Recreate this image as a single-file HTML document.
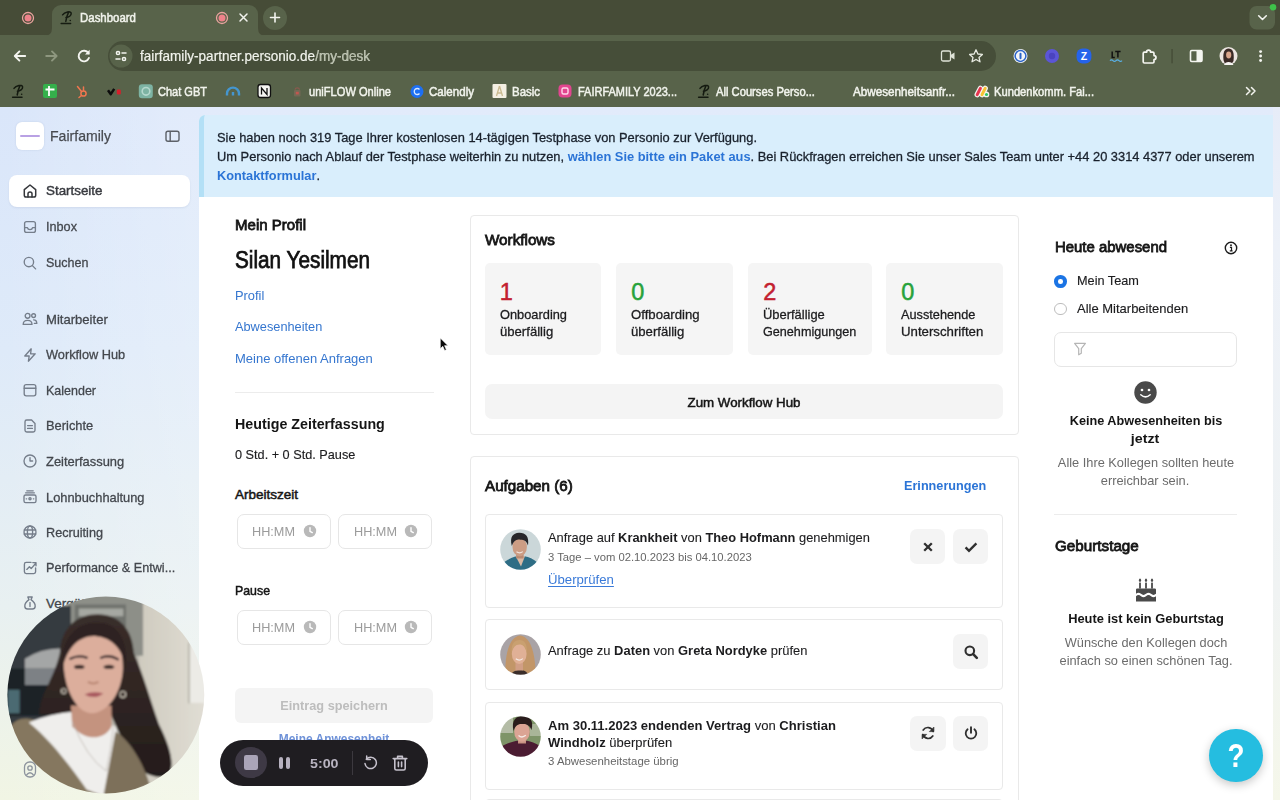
<!DOCTYPE html>
<html lang="de">
<head>
<meta charset="utf-8">
<title>Dashboard</title>
<style>
*{box-sizing:border-box;margin:0;padding:0}
html,body{width:1280px;height:800px;overflow:hidden}
body{font-family:"Liberation Sans",sans-serif;position:relative;background:#e6edf8;color:#1a1a1a;font-size:13px}
.abs{position:absolute}
b{font-weight:bold;-webkit-text-stroke:0}
#tabstrip{left:0;top:0;width:1280px;height:36px;background:#464c37}
#toolbar{left:0;top:35px;width:1280px;height:72px;background:#58634a}
#tab{left:52px;top:5px;width:206px;height:32px;background:#58634a;border-radius:9px 9px 0 0}
#urlpill{left:108px;top:41px;width:888px;height:30px;border-radius:15px;background:#464e39}
#pagebg{left:0;top:107px;width:1280px;height:693px;background:linear-gradient(90deg,rgba(255,255,255,0) 0,rgba(255,255,255,.22) 190px,rgba(255,255,255,.22) 100%),linear-gradient(180deg,#dae6fa 0%,#deeaf9 35%,#e8f0f1 72%,#f1f5e4 100%)}
#main{left:199px;top:115px;width:1074px;height:685px;background:#fff;border-radius:6px 0 0 0}
#banner{left:199px;top:115px;width:1074px;height:82px;background:#d9eefc;border-left:5px solid #b3e0f6;border-radius:6px 0 0 0}
.card{border:1px solid #e9e9e9;border-radius:4px;background:#fff}
.tile{background:#f5f5f5;border-radius:5px}
.btn{background:#f4f4f4;border-radius:7px}
.inp{border:1.5px solid #e6e6e6;border-radius:7px;background:#fff}
.hr{height:1px;background:#ececec}
.av{border-radius:50%;overflow:hidden}
#rstrip{left:1273px;top:107px;width:7px;height:693px;background:linear-gradient(180deg,#e6ecf8 0%,#edf1f8 20%,#f0f3f3 70%,#f5f7ea 100%)}
</style>
</head>
<body>
<div id="tabstrip" class="abs"></div><div id="toolbar" class="abs"></div><div id="tab" class="abs"></div><div id="urlpill" class="abs"></div>
<svg class="abs" style="left:0;top:0" width="1280" height="106" viewBox="0 0 1280 106">
  <!-- tab curves -->
  <path d="M44 36 Q52 36 52 28 L52 36 Z" fill="#58634a"/>
  <path d="M266 36 Q258 36 258 28 L258 36 Z" fill="#58634a"/>
  <!-- record dot 1 -->
  <circle cx="28" cy="18" r="5.500" fill="none" stroke="#e9a39e" stroke-width="1.300"/>
  <circle cx="28" cy="18" r="3.500" fill="#ee828a"/>
  <!-- favicon P -->
  <g stroke="#161c12" stroke-width="1.500" fill="none" stroke-linecap="round" stroke-linejoin="round">
    <path d="M65.800 21.400 C66.400 18 67.200 15 68.400 12.600 M62.600 14.800 C64.500 12 70.800 10.600 71.200 13.200 C71.500 15.600 68.600 17.400 66 17.600"/><path d="M70.200 20.600 h0.100"/>
    <path d="M61.200 23.600 H70.600"/>
  </g>
  <!-- record dot 2 -->
  <circle cx="222" cy="18" r="5.500" fill="none" stroke="#e9a39e" stroke-width="1.300"/>
  <circle cx="222" cy="18" r="3.500" fill="#ee828a"/>
  <!-- close x -->
  <path d="M240 14 L247 21 M247 14 L240 21" stroke="#f2f3ee" stroke-width="1.5" stroke-linecap="round"/>
  <!-- plus -->
  <circle cx="275" cy="18" r="12" fill="#58634a"/>
  <path d="M270.5 17.5 H279.5 M275 13 V22" stroke="#f4f5f0" stroke-width="1.6" stroke-linecap="round"/>
  <!-- chevron box right -->
  <rect x="1249.500" y="6" width="25.500" height="23.500" rx="7" fill="#58634a"/>
  <path d="M1258.700 15.800 L1262.500 19.500 L1266.300 15.800" stroke="#f4f5f0" stroke-width="1.6" fill="none" stroke-linecap="round" stroke-linejoin="round"/>
  <circle cx="1273" cy="7.200" r="3.300" fill="#3ec24a"/>
  <!-- back -->
  <path d="M25.200 56 H15 M19.400 51.400 L14.800 56 L19.400 60.600" stroke="#f4f5f0" stroke-width="1.900" fill="none" stroke-linecap="round" stroke-linejoin="round"/>
  <!-- forward dim -->
  <path d="M46.200 56 H56.400 M52 51.400 L56.600 56 L52 60.600" stroke="#8e977f" stroke-width="1.900" fill="none" stroke-linecap="round" stroke-linejoin="round"/>
  <!-- reload -->
  <path d="M88.400 53.200 A5.300 5.300 0 1 0 88.900 58" stroke="#f4f5f0" stroke-width="1.900" fill="none" stroke-linecap="round"/>
  <path d="M89.600 49.800 V54.400 H85 Z" fill="#f4f5f0"/>
  <!-- site settings -->
  <circle cx="121" cy="56" r="11.5" fill="#58634a"/>
  <g stroke="#f4f5f0" stroke-width="1.5" fill="none" stroke-linecap="round">
    <circle cx="118" cy="53" r="1.6"/><path d="M122 53 H126"/>
    <circle cx="124" cy="59" r="1.6"/><path d="M116 59 H120"/>
  </g>
  <!-- camera -->
  <rect x="941.5" y="51" width="9" height="10" rx="1.5" fill="none" stroke="#dfe3d8" stroke-width="1.3"/>
  <path d="M950.5 55 L954.5 52.5 V59.5 L950.5 57 Z" fill="#dfe3d8"/>
  <!-- star -->
  <path d="M976 49.8 L977.9 54 L982.4 54.4 L979 57.4 L980 61.8 L976 59.5 L972 61.8 L973 57.4 L969.6 54.4 L974.1 54 Z" fill="none" stroke="#e8ebe2" stroke-width="1.3" stroke-linejoin="round"/>
  <!-- 1password -->
  <circle cx="1020.5" cy="56" r="7" fill="#f3f5f8"/>
  <circle cx="1020.5" cy="56" r="5.4" fill="none" stroke="#2a63c8" stroke-width="1.5"/>
  <rect x="1019.5" y="52.8" width="2" height="6.4" rx="1" fill="#2a63c8"/>
  <!-- purple -->
  <circle cx="1052" cy="56" r="7" fill="#5b55d6"/>
  <circle cx="1052" cy="56" r="3.2" fill="#4a43bf"/>
  <!-- Z -->
  <rect x="1076.600" y="48.600" width="14.800" height="14.800" rx="5.800" fill="#2563eb"/>
  <!-- LT -->
  <path d="M1112.200 51.600 V57.400 H1114.800 M1115.200 51.600 H1120.600 M1117.900 51.600 V57.400" stroke="#111" stroke-width="1.500" fill="none"/>
  <path d="M1110 60.600 q1.500 -1.600 3 0 t3 0 t3 0 t3 0" stroke="#5ab0e6" stroke-width="1.300" fill="none"/>
  <!-- puzzle -->
  <path d="M1143.200 53.400 Q1143.200 52.200 1144.400 52.200 H1146.600 A2 2 0 1 1 1150.600 52.200 H1152.800 Q1154 52.200 1154 53.400 V55.600 A2 2 0 1 1 1154 59.600 V61.800 Q1154 63 1152.800 63 H1144.400 Q1143.200 63 1143.200 61.800 Z" fill="none" stroke="#f4f5f0" stroke-width="1.700" stroke-linejoin="round"/>
  <!-- separator -->
  <rect x="1171.400" y="49" width="1.300" height="14.300" fill="#434b36"/>
  <!-- side panel -->
  <rect x="1190.5" y="50.5" width="11.5" height="11" rx="1.2" fill="none" stroke="#f4f5f0" stroke-width="1.6"/>
  <rect x="1196.5" y="50.5" width="5.5" height="11" fill="#f4f5f0"/>
  <!-- avatar -->
  <circle cx="1228.5" cy="56" r="9" fill="#ece6e2"/>
  <path d="M1223.5 60 C1222.5 52 1225 48.5 1228.5 48.5 C1232.5 48.5 1234.5 52 1233.5 61 L1231.5 64 H1225 Z" fill="#3a2a26"/>
  <ellipse cx="1228.7" cy="55" rx="2.6" ry="3.4" fill="#d9a68c"/>
  <path d="M1224 65 C1225 61 1232 61 1233.5 65 Z" fill="#f6f4f2"/>
  <!-- dots -->
  <circle cx="1260.600" cy="51.600" r="1.450" fill="#f4f5f0"/><circle cx="1260.600" cy="56" r="1.450" fill="#f4f5f0"/><circle cx="1260.600" cy="60.500" r="1.450" fill="#f4f5f0"/>

  <!-- bookmarks icons -->
  <g stroke="#141a10" stroke-width="1.500" fill="none" stroke-linecap="round" stroke-linejoin="round" transform="translate(-48.600 73.600)">
    <path d="M65.800 21.400 C66.400 18 67.200 15 68.400 12.600 M62.600 14.800 C64.500 12 70.800 10.600 71.200 13.200 C71.500 15.600 68.600 17.400 66 17.600"/><path d="M70.200 20.600 h0.100"/>
    <path d="M61.200 23.600 H70.600"/>
  </g>
  <rect x="43" y="84" width="14" height="14" rx="2" fill="#35b04b"/>
  <path d="M45.500 89.500 H54.500 M49 86 V96" stroke="#fff" stroke-width="1.800"/>
  <g stroke="#f0764f" stroke-width="1.500" fill="none" stroke-linecap="round">
    <circle cx="83.500" cy="93.500" r="2.600"/><path d="M83.500 90.500 V87 M81.500 91.500 L77.500 86.500 M81.500 95.500 L79 97.500"/>
  </g>
  <path d="M108 90.200 L110.800 94.200 L114.200 88.800" stroke="#0c0c0c" stroke-width="2.500" fill="none" stroke-linejoin="round"/>
  <rect x="116.800" y="89.500" width="4" height="5" rx="1.200" fill="#d61f2b"/>
  <rect x="138.800" y="84.300" width="14" height="14" rx="3.200" fill="#7db3a3"/>
  <circle cx="146" cy="91.300" r="3.800" fill="none" stroke="#b5d8cd" stroke-width="1.600"/>
  <path d="M227 95.400 V93.600 A6 6 0 0 1 239 93.600 V95.400 M233 95.400 V92" stroke="#4496d0" stroke-width="2.400" fill="none"/>
  <rect x="258" y="84.500" width="12.500" height="13" rx="2.500" fill="#f5f5f2" stroke="#111" stroke-width="1.300"/>
  <path d="M261.500 94.500 V88 L267 94.500 V88" stroke="#111" stroke-width="1.300" fill="none"/>
  <rect x="294" y="90" width="6.500" height="6.500" rx="1" fill="#7a6a58" opacity=".8"/><rect x="295.800" y="91.800" width="3" height="2.600" fill="#c2564f"/>
  <path d="M295 89.600 A2.300 2.300 0 0 1 299.500 89.600" stroke="#8a5a4e" stroke-width="1.300" fill="none"/>
  <circle cx="417" cy="91.500" r="6.500" fill="#1d6ff2"/>
  <path d="M419.500 89.500 A3 3 0 1 0 419.500 93.500" stroke="#d8e8ff" stroke-width="1.300" fill="none"/>
  <rect x="492.500" y="84" width="14" height="14" rx="1" fill="#f4efe2"/>
  <path d="M499.500 86 L496.500 96 M499.500 86 L502.500 96 M497.500 93 H501.500" stroke="#c9b98f" stroke-width="1.300" fill="none"/>
  <rect x="558.500" y="84.500" width="13" height="13" rx="4" fill="#e2458f"/>
  <rect x="562" y="88" width="6" height="6" rx="1.500" fill="none" stroke="#ffd9ea" stroke-width="1.400"/>
  <g stroke="#141a10" stroke-width="1.500" fill="none" stroke-linecap="round" stroke-linejoin="round" transform="translate(637.400 73.600)">
    <path d="M65.800 21.400 C66.400 18 67.200 15 68.400 12.600 M62.600 14.800 C64.500 12 70.800 10.600 71.200 13.200 C71.500 15.600 68.600 17.400 66 17.600"/><path d="M70.200 20.600 h0.100"/>
    <path d="M61.200 23.600 H70.600"/>
  </g>
  <path d="M977.200 94.600 L980.400 88.400 M982 94.600 L985.200 88.400" stroke="#f6f4f0" stroke-width="5.400" stroke-linecap="round"/><circle cx="986.400" cy="94.400" r="2.900" fill="#f6f4f0"/>
  <path d="M977.200 94.600 L980.400 88.400" stroke="#e8354f" stroke-width="3" stroke-linecap="round"/>
  <path d="M982 94.600 L985.200 88.400" stroke="#f7c331" stroke-width="3" stroke-linecap="round"/>
  <circle cx="986.500" cy="94.500" r="1.600" fill="#2fc566"/>
  <path d="M1246.500 87.500 L1250 91 L1246.500 94.500 M1251.500 87.500 L1255 91 L1251.500 94.500" stroke="#f4f5f0" stroke-width="1.500" fill="none" stroke-linecap="round" stroke-linejoin="round"/>
</svg>
<div class="abs" style="top:9.9px;height:16px;line-height:16px;font-size:12px;color:#f1f3ec;white-space:nowrap;transform:scaleX(0.9537);transform-origin:0 50%;-webkit-text-stroke:0.5px #f1f3ec;left:80px;">Dashboard</div><div class="abs" style="top:46.7px;height:18px;line-height:18px;font-size:14px;color:#f1f3ec;white-space:nowrap;transform:scaleX(0.9659);transform-origin:0 50%;-webkit-text-stroke:0.2px #f1f3ec;left:140px;">fairfamily-partner.personio.de<span style="color:#b4bba6">/my-desk</span></div><div class="abs" style="top:49.1px;height:14px;line-height:14px;font-size:10.5px;color:#fff;white-space:nowrap;font-weight:bold;left:1084px;width:0;display:flex;justify-content:center;"><span style="white-space:nowrap">Z</span></div><div class="abs" style="top:83.8px;height:16px;line-height:16px;font-size:12px;color:#f1f3ec;white-space:nowrap;transform:scaleX(0.9183);transform-origin:0 50%;-webkit-text-stroke:0.5px #f1f3ec;left:158px;">Chat GBT</div><div class="abs" style="top:83.8px;height:16px;line-height:16px;font-size:12px;color:#f1f3ec;white-space:nowrap;transform:scaleX(0.9244);transform-origin:0 50%;-webkit-text-stroke:0.5px #f1f3ec;left:309px;">uniFLOW Online</div><div class="abs" style="top:83.8px;height:16px;line-height:16px;font-size:12px;color:#f1f3ec;white-space:nowrap;transform:scaleX(0.9635);transform-origin:0 50%;-webkit-text-stroke:0.5px #f1f3ec;left:429px;">Calendly</div><div class="abs" style="top:83.8px;height:16px;line-height:16px;font-size:12px;color:#f1f3ec;white-space:nowrap;transform:scaleX(0.9542);transform-origin:0 50%;-webkit-text-stroke:0.5px #f1f3ec;left:512px;">Basic</div><div class="abs" style="top:83.8px;height:16px;line-height:16px;font-size:12px;color:#f1f3ec;white-space:nowrap;transform:scaleX(0.9143);transform-origin:0 50%;-webkit-text-stroke:0.5px #f1f3ec;left:578px;">FAIRFAMILY 2023...</div><div class="abs" style="top:83.8px;height:16px;line-height:16px;font-size:12px;color:#f1f3ec;white-space:nowrap;transform:scaleX(0.9335);transform-origin:0 50%;-webkit-text-stroke:0.5px #f1f3ec;left:716px;">All Courses Perso...</div><div class="abs" style="top:83.8px;height:16px;line-height:16px;font-size:12px;color:#f1f3ec;white-space:nowrap;transform:scaleX(0.9739);transform-origin:0 50%;-webkit-text-stroke:0.5px #f1f3ec;left:853px;">Abwesenheitsanfr...</div><div class="abs" style="top:83.8px;height:16px;line-height:16px;font-size:12px;color:#f1f3ec;white-space:nowrap;transform:scaleX(0.9312);transform-origin:0 50%;-webkit-text-stroke:0.5px #f1f3ec;left:994px;">Kundenkomm. Fai...</div>
<div id="pagebg" class="abs"></div><div id="main" class="abs"></div><div id="banner" class="abs"></div><div id="rstrip" class="abs"></div>
<div class="abs" style="left:16px;top:122px;width:28px;height:28px;border-radius:6px;background:#fff;box-shadow:0 0 2px rgba(120,140,180,.25)"></div><div class="abs" style="left:20px;top:135.3px;width:20px;height:1.6px;background:#8a63d2;border-radius:1px;opacity:.6"></div><div class="abs" style="top:126.1px;height:20px;line-height:20px;font-size:15.5px;color:#484b51;white-space:nowrap;transform:scaleX(0.9081);transform-origin:0 50%;-webkit-text-stroke:0.25px #484b51;left:50px;">Fairfamily</div><svg class="abs" style="left:164px;top:129px" width="18" height="15" viewBox="0 0 18 15"><rect x="2" y="2.2" width="13" height="10" rx="2" fill="none" stroke="#5d6168" stroke-width="1.4"/><path d="M6.2 2.2 V12.2" stroke="#5d6168" stroke-width="1.4"/></svg><div class="abs" style="left:9px;top:175px;width:181px;height:32px;border-radius:8px;background:#fff;box-shadow:0 1px 2px rgba(90,110,150,.12)"></div><svg class="abs" style="left:20px;top:181px" width="20" height="20" viewBox="0 0 20 20" fill="none" stroke="#35373b" stroke-width="1.5" stroke-linecap="round" stroke-linejoin="round"><path d="M4.3 8.6 L10 4 L15.7 8.6 V14.2 Q15.7 16 13.9 16 H6.100 Q4.300 16 4.300 14.200 Z"/><path d="M8 16 V12.800 Q8 11 10 11 Q12 11 12 12.800 V16"/></svg><div class="abs" style="top:182.1px;height:18px;line-height:18px;font-size:13.5px;color:#393b40;white-space:nowrap;transform:scaleX(0.9907);transform-origin:0 50%;-webkit-text-stroke:0.45px #393b40;left:46px;">Startseite</div><svg class="abs" style="left:20px;top:216.5px" width="20" height="20" viewBox="0 0 20 20" fill="none" stroke="#757e8b" stroke-width="1.35" stroke-linecap="round" stroke-linejoin="round"><rect x="4.600" y="4.600" width="10.800" height="10.800" rx="2"/><path d="M4.600 10.600 H7.400 Q7.800 12.600 10 12.600 Q12.200 12.600 12.600 10.600 H15.400"/></svg><div class="abs" style="top:218.2px;height:18px;line-height:18px;font-size:13.5px;color:#43474d;white-space:nowrap;transform:scaleX(0.9385);transform-origin:0 50%;-webkit-text-stroke:0.3px #43474d;left:46px;">Inbox</div><svg class="abs" style="left:20px;top:252.5px" width="20" height="20" viewBox="0 0 20 20" fill="none" stroke="#757e8b" stroke-width="1.35" stroke-linecap="round" stroke-linejoin="round"><circle cx="8.900" cy="9" r="4.700"/><path d="M12.400 12.600 L15.600 15.900"/></svg><div class="abs" style="top:253.6px;height:18px;line-height:18px;font-size:13.5px;color:#43474d;white-space:nowrap;transform:scaleX(0.9280);transform-origin:0 50%;-webkit-text-stroke:0.3px #43474d;left:46px;">Suchen</div><svg class="abs" style="left:20px;top:309px" width="20" height="20" viewBox="0 0 20 20" fill="none" stroke="#757e8b" stroke-width="1.35" stroke-linecap="round" stroke-linejoin="round"><circle cx="7.600" cy="6.800" r="2.400"/><path d="M3.200 15.400 Q3.200 11.400 7.600 11.400 Q12 11.400 12 15.400 Z"/><circle cx="13.600" cy="6.600" r="1.900"/><path d="M13.600 10.800 Q16.800 10.800 16.800 14.400 H14.400"/></svg><div class="abs" style="top:310.7px;height:18px;line-height:18px;font-size:13.5px;color:#43474d;white-space:nowrap;transform:scaleX(0.9689);transform-origin:0 50%;-webkit-text-stroke:0.3px #43474d;left:46px;">Mitarbeiter</div><svg class="abs" style="left:20px;top:344.5px" width="20" height="20" viewBox="0 0 20 20" fill="none" stroke="#757e8b" stroke-width="1.35" stroke-linecap="round" stroke-linejoin="round"><path d="M11.200 3.800 L4.800 11 H9.200 L8.400 16.200 L15.200 8.800 H10.600 Z"/></svg><div class="abs" style="top:346.2px;height:18px;line-height:18px;font-size:13.5px;color:#43474d;white-space:nowrap;transform:scaleX(0.9453);transform-origin:0 50%;-webkit-text-stroke:0.3px #43474d;left:46px;">Workflow Hub</div><svg class="abs" style="left:20px;top:380px" width="20" height="20" viewBox="0 0 20 20" fill="none" stroke="#757e8b" stroke-width="1.35" stroke-linecap="round" stroke-linejoin="round"><rect x="4.200" y="4.600" width="11.600" height="11.200" rx="2"/><path d="M4.200 8.200 H15.800"/></svg><div class="abs" style="top:381.7px;height:18px;line-height:18px;font-size:13.5px;color:#43474d;white-space:nowrap;transform:scaleX(0.9251);transform-origin:0 50%;-webkit-text-stroke:0.3px #43474d;left:46px;">Kalender</div><svg class="abs" style="left:20px;top:415.5px" width="20" height="20" viewBox="0 0 20 20" fill="none" stroke="#757e8b" stroke-width="1.35" stroke-linecap="round" stroke-linejoin="round"><path d="M5 5.800 Q5 4 6.800 4 H11.600 L15 7.400 V14.200 Q15 16 13.200 16 H6.800 Q5 16 5 14.200 Z"/><path d="M7.600 9.600 H12.400 M7.600 12.400 H12.400"/></svg><div class="abs" style="top:417.3px;height:18px;line-height:18px;font-size:13.5px;color:#43474d;white-space:nowrap;transform:scaleX(0.9529);transform-origin:0 50%;-webkit-text-stroke:0.3px #43474d;left:46px;">Berichte</div><svg class="abs" style="left:20px;top:451px" width="20" height="20" viewBox="0 0 20 20" fill="none" stroke="#757e8b" stroke-width="1.35" stroke-linecap="round" stroke-linejoin="round"><circle cx="10" cy="10" r="6"/><path d="M10 6.600 V10 H12.600"/></svg><div class="abs" style="top:452.7px;height:18px;line-height:18px;font-size:13.5px;color:#43474d;white-space:nowrap;transform:scaleX(0.9560);transform-origin:0 50%;-webkit-text-stroke:0.3px #43474d;left:46px;">Zeiterfassung</div><svg class="abs" style="left:20px;top:486.5px" width="20" height="20" viewBox="0 0 20 20" fill="none" stroke="#757e8b" stroke-width="1.35" stroke-linecap="round" stroke-linejoin="round"><rect x="4" y="8" width="12" height="7.600" rx="1.600"/><circle cx="10" cy="11.800" r="1.100"/><path d="M5.600 5.800 H14.400 M6.800 3.800 H13.200 M6.200 11.800 H6.600 M13.400 11.800 H13.800"/></svg><div class="abs" style="top:488.5px;height:18px;line-height:18px;font-size:13.5px;color:#43474d;white-space:nowrap;transform:scaleX(0.9507);transform-origin:0 50%;-webkit-text-stroke:0.3px #43474d;left:46px;">Lohnbuchhaltung</div><svg class="abs" style="left:20px;top:522px" width="20" height="20" viewBox="0 0 20 20" fill="none" stroke="#757e8b" stroke-width="1.35" stroke-linecap="round" stroke-linejoin="round"><circle cx="10" cy="10" r="6"/><ellipse cx="10" cy="10" rx="2.600" ry="6"/><path d="M4.200 8 H15.800 M4.200 12 H15.800"/></svg><div class="abs" style="top:523.8px;height:18px;line-height:18px;font-size:13.5px;color:#43474d;white-space:nowrap;transform:scaleX(0.9378);transform-origin:0 50%;-webkit-text-stroke:0.3px #43474d;left:46px;">Recruiting</div><svg class="abs" style="left:20px;top:557.5px" width="20" height="20" viewBox="0 0 20 20" fill="none" stroke="#757e8b" stroke-width="1.35" stroke-linecap="round" stroke-linejoin="round"><path d="M11 4.400 H6.200 Q4.400 4.400 4.400 6.200 V13.800 Q4.400 15.600 6.200 15.600 H13.800 Q15.600 15.600 15.600 13.800 V10"/><path d="M6.800 11.400 L9.400 8.800 L11.200 10.600 L15.800 5.200 M12.800 4.600 H16 V7.800"/></svg><div class="abs" style="top:559.3px;height:18px;line-height:18px;font-size:13.5px;color:#43474d;white-space:nowrap;transform:scaleX(0.9358);transform-origin:0 50%;-webkit-text-stroke:0.3px #43474d;left:46px;">Performance &amp; Entwi...</div><svg class="abs" style="left:20px;top:593px" width="20" height="20" viewBox="0 0 20 20" fill="none" stroke="#757e8b" stroke-width="1.35" stroke-linecap="round" stroke-linejoin="round"><path d="M7.800 4 H12.200 L11 6.600 Q15.400 9.600 15.200 13.400 Q15 16 12.400 16 H7.600 Q5 16 4.800 13.400 Q4.600 9.600 9 6.600 Z"/><path d="M10 9.600 V13.600"/></svg><div class="abs" style="top:595.0px;height:18px;line-height:18px;font-size:13.5px;color:#43474d;white-space:nowrap;-webkit-text-stroke:0.3px #43474d;left:46px;">Vergütung</div><svg class="abs" style="left:22px;top:760px" width="16" height="20" viewBox="0 0 16 20" fill="none" stroke="#8d949e" stroke-width="1.300"><rect x="2.500" y="2" width="11" height="15" rx="5"/><circle cx="8" cy="8" r="2.200"/><path d="M4.500 15 Q8 10.500 11.500 15"/></svg><div class="abs" style="top:128.8px;height:18px;line-height:18px;font-size:13.5px;color:#19212c;white-space:nowrap;transform:scaleX(0.9525);transform-origin:0 50%;-webkit-text-stroke:0.3px #19212c;left:217px;">Sie haben noch 319 Tage Ihrer kostenlosen 14-tägigen Testphase von Personio zur Verfügung.</div><div class="abs" style="top:147.7px;height:18px;line-height:18px;font-size:13.5px;color:#19212c;white-space:nowrap;transform:scaleX(0.9523);transform-origin:0 50%;-webkit-text-stroke:0.3px #19212c;left:217px;">Um Personio nach Ablauf der Testphase weiterhin zu nutzen, <b style="color:#2b74d6">wählen Sie bitte ein Paket aus</b>. Bei Rückfragen erreichen Sie unser Sales Team unter +44 20 3314 4377 oder unserem</div><div class="abs" style="top:166.5px;height:18px;line-height:18px;font-size:13.5px;color:#19212c;white-space:nowrap;transform:scaleX(0.9469);transform-origin:0 50%;-webkit-text-stroke:0.3px #19212c;left:217px;"><b style="color:#2b74d6">Kontaktformular</b>.</div><div class="abs" style="top:214.8px;height:20px;line-height:20px;font-size:15.5px;color:#151515;white-space:nowrap;transform:scaleX(0.9697);transform-origin:0 50%;-webkit-text-stroke:0.8px #151515;left:235px;">Mein Profil</div><div class="abs" style="top:244.8px;height:30px;line-height:30px;font-size:23px;color:#111;white-space:nowrap;transform:scaleX(0.9023);transform-origin:0 50%;-webkit-text-stroke:0.75px #111;left:235px;">Silan Yesilmen</div><div class="abs" style="top:286.5px;height:18px;line-height:18px;font-size:13.5px;color:#3576cf;white-space:nowrap;transform:scaleX(0.9524);transform-origin:0 50%;left:235px;">Profil</div><div class="abs" style="top:318.2px;height:18px;line-height:18px;font-size:13.5px;color:#3576cf;white-space:nowrap;transform:scaleX(0.9455);transform-origin:0 50%;left:235px;">Abwesenheiten</div><div class="abs" style="top:349.8px;height:18px;line-height:18px;font-size:13.5px;color:#3576cf;white-space:nowrap;transform:scaleX(0.9628);transform-origin:0 50%;left:235px;">Meine offenen Anfragen</div><div class="abs hr" style="left:235px;top:392px;width:199px"></div><div class="abs" style="top:413.5px;height:20px;line-height:20px;font-size:15.5px;color:#151515;white-space:nowrap;font-weight:bold;transform:scaleX(0.9203);transform-origin:0 50%;left:235px;">Heutige Zeiterfassung</div><div class="abs" style="top:446.2px;height:18px;line-height:18px;font-size:13.5px;color:#1c1c1e;white-space:nowrap;transform:scaleX(0.9401);transform-origin:0 50%;-webkit-text-stroke:0.15px #1c1c1e;left:235px;">0 Std. + 0 Std. Pause</div><div class="abs" style="top:486.2px;height:18px;line-height:18px;font-size:13.5px;color:#151515;white-space:nowrap;-webkit-text-stroke:0.5px #151515;left:235px;">Arbeitszeit</div><div class="abs" style="top:581.5px;height:18px;line-height:18px;font-size:13.5px;color:#151515;white-space:nowrap;transform:scaleX(0.9143);transform-origin:0 50%;-webkit-text-stroke:0.5px #151515;left:235px;">Pause</div><div class="abs inp" style="left:236.5px;top:513.8px;width:94.2px;height:35.5px"></div><div class="abs" style="top:523.3px;height:18px;line-height:18px;font-size:13.5px;color:#9b9b9b;white-space:nowrap;transform:scaleX(0.9399);transform-origin:0 50%;left:251.8px;">HH:MM</div><svg class="abs" style="left:302.5px;top:524.1px" width="14" height="14" viewBox="0 0 14 14"><circle cx="7" cy="7" r="6.2" fill="#b9b9b9"/><path d="M7 3.600 V7.300 L9.300 8.600" stroke="#fff" stroke-width="1.400" fill="none" stroke-linecap="round"/></svg><div class="abs inp" style="left:338.2px;top:513.8px;width:94.2px;height:35.5px"></div><div class="abs" style="top:523.3px;height:18px;line-height:18px;font-size:13.5px;color:#9b9b9b;white-space:nowrap;transform:scaleX(0.9399);transform-origin:0 50%;left:353.5px;">HH:MM</div><svg class="abs" style="left:404.2px;top:524.1px" width="14" height="14" viewBox="0 0 14 14"><circle cx="7" cy="7" r="6.2" fill="#b9b9b9"/><path d="M7 3.600 V7.300 L9.300 8.600" stroke="#fff" stroke-width="1.400" fill="none" stroke-linecap="round"/></svg><div class="abs inp" style="left:236.5px;top:609.8px;width:94.2px;height:35.5px"></div><div class="abs" style="top:619.3px;height:18px;line-height:18px;font-size:13.5px;color:#9b9b9b;white-space:nowrap;transform:scaleX(0.9399);transform-origin:0 50%;left:251.8px;">HH:MM</div><svg class="abs" style="left:302.5px;top:620.1px" width="14" height="14" viewBox="0 0 14 14"><circle cx="7" cy="7" r="6.2" fill="#b9b9b9"/><path d="M7 3.600 V7.300 L9.300 8.600" stroke="#fff" stroke-width="1.400" fill="none" stroke-linecap="round"/></svg><div class="abs inp" style="left:338.2px;top:609.8px;width:94.2px;height:35.5px"></div><div class="abs" style="top:619.3px;height:18px;line-height:18px;font-size:13.5px;color:#9b9b9b;white-space:nowrap;transform:scaleX(0.9399);transform-origin:0 50%;left:353.5px;">HH:MM</div><svg class="abs" style="left:404.2px;top:620.1px" width="14" height="14" viewBox="0 0 14 14"><circle cx="7" cy="7" r="6.2" fill="#b9b9b9"/><path d="M7 3.600 V7.300 L9.300 8.600" stroke="#fff" stroke-width="1.400" fill="none" stroke-linecap="round"/></svg><div class="abs" style="left:234.7px;top:688.2px;width:198.800px;height:34.600px;border-radius:6px;background:#f4f4f4"></div><div class="abs" style="top:696.9px;height:18px;line-height:18px;font-size:13.5px;color:#bdbdbd;white-space:nowrap;font-weight:bold;transform:scaleX(0.9426);transform-origin:50% 50%;left:334.2px;width:0;display:flex;justify-content:center;"><span style="white-space:nowrap">Eintrag speichern</span></div><div class="abs" style="top:730.0px;height:18px;line-height:18px;font-size:13.5px;color:#6f92d8;white-space:nowrap;font-weight:bold;transform:scaleX(0.8855);transform-origin:50% 50%;left:334px;width:0;display:flex;justify-content:center;"><span style="white-space:nowrap">Meine Anwesenheit</span></div><div class="abs card" style="left:469.500px;top:215.300px;width:549.300px;height:219.400px"></div><div class="abs" style="top:230.1px;height:20px;line-height:20px;font-size:15.5px;color:#151515;white-space:nowrap;transform:scaleX(0.9831);transform-origin:0 50%;-webkit-text-stroke:0.8px #151515;left:485px;">Workflows</div><div class="abs tile" style="left:484.6px;top:263px;width:116.6px;height:92px"></div><div class="abs" style="top:277.2px;height:31px;line-height:31px;font-size:23.5px;color:#c3202f;white-space:nowrap;-webkit-text-stroke:0.5px #c3202f;left:499.8px;">1</div><div class="abs" style="top:306.1px;height:18px;line-height:18px;font-size:13.5px;color:#1c1c1e;white-space:nowrap;transform:scaleX(0.9495);transform-origin:0 50%;-webkit-text-stroke:0.3px #1c1c1e;left:499.8px;">Onboarding</div><div class="abs" style="top:323.1px;height:18px;line-height:18px;font-size:13.5px;color:#1c1c1e;white-space:nowrap;transform:scaleX(0.9709);transform-origin:0 50%;-webkit-text-stroke:0.3px #1c1c1e;left:499.8px;">überfällig</div><div class="abs tile" style="left:616px;top:263px;width:117px;height:92px"></div><div class="abs" style="top:277.2px;height:31px;line-height:31px;font-size:23.5px;color:#27a23b;white-space:nowrap;-webkit-text-stroke:0.5px #27a23b;left:631.2px;">0</div><div class="abs" style="top:306.1px;height:18px;line-height:18px;font-size:13.5px;color:#1c1c1e;white-space:nowrap;transform:scaleX(0.9756);transform-origin:0 50%;-webkit-text-stroke:0.3px #1c1c1e;left:631.2px;">Offboarding</div><div class="abs" style="top:323.1px;height:18px;line-height:18px;font-size:13.5px;color:#1c1c1e;white-space:nowrap;transform:scaleX(0.9727);transform-origin:0 50%;-webkit-text-stroke:0.3px #1c1c1e;left:631.2px;">überfällig</div><div class="abs tile" style="left:748px;top:263px;width:124px;height:92px"></div><div class="abs" style="top:277.2px;height:31px;line-height:31px;font-size:23.5px;color:#c3202f;white-space:nowrap;-webkit-text-stroke:0.5px #c3202f;left:763.2px;">2</div><div class="abs" style="top:306.1px;height:18px;line-height:18px;font-size:13.5px;color:#1c1c1e;white-space:nowrap;transform:scaleX(0.9574);transform-origin:0 50%;-webkit-text-stroke:0.3px #1c1c1e;left:763.2px;">Überfällige</div><div class="abs" style="top:323.1px;height:18px;line-height:18px;font-size:13.5px;color:#1c1c1e;white-space:nowrap;transform:scaleX(0.9346);transform-origin:0 50%;-webkit-text-stroke:0.3px #1c1c1e;left:763.2px;">Genehmigungen</div><div class="abs tile" style="left:886px;top:263px;width:117px;height:92px"></div><div class="abs" style="top:277.2px;height:31px;line-height:31px;font-size:23.5px;color:#27a23b;white-space:nowrap;-webkit-text-stroke:0.5px #27a23b;left:901.2px;">0</div><div class="abs" style="top:306.1px;height:18px;line-height:18px;font-size:13.5px;color:#1c1c1e;white-space:nowrap;transform:scaleX(0.9427);transform-origin:0 50%;-webkit-text-stroke:0.3px #1c1c1e;left:901.2px;">Ausstehende</div><div class="abs" style="top:323.1px;height:18px;line-height:18px;font-size:13.5px;color:#1c1c1e;white-space:nowrap;transform:scaleX(0.9792);transform-origin:0 50%;-webkit-text-stroke:0.3px #1c1c1e;left:901.2px;">Unterschriften</div><div class="abs btn" style="left:484.600px;top:384.200px;width:518.400px;height:35.300px"></div><div class="abs" style="top:393.5px;height:18px;line-height:18px;font-size:13.5px;color:#151515;white-space:nowrap;transform:scaleX(0.9866);transform-origin:50% 50%;-webkit-text-stroke:0.5px #151515;left:744px;width:0;display:flex;justify-content:center;"><span style="white-space:nowrap">Zum Workflow Hub</span></div><div class="abs card" style="left:469.500px;top:456.300px;width:549.300px;height:360px"></div><div class="abs" style="top:476.3px;height:20px;line-height:20px;font-size:15.5px;color:#151515;white-space:nowrap;transform:scaleX(0.9796);transform-origin:0 50%;-webkit-text-stroke:0.8px #151515;left:485px;">Aufgaben (6)</div><div class="abs" style="top:477.3px;height:18px;line-height:18px;font-size:13.5px;color:#2b74d6;white-space:nowrap;font-weight:bold;transform:scaleX(0.9377);transform-origin:0 50%;left:903.5px;">Erinnerungen</div><div class="abs card" style="left:484.600px;top:514px;width:518.400px;height:94.2px"></div><div class="abs card" style="left:484.600px;top:619px;width:518.400px;height:70.6px"></div><div class="abs card" style="left:484.600px;top:701.5px;width:518.400px;height:88.2px"></div><div class="abs card" style="left:484.600px;top:799.3px;width:518.400px;height:60px"></div><div class="abs" style="top:529.3px;height:18px;line-height:18px;font-size:13.5px;color:#1c1c1e;white-space:nowrap;transform:scaleX(0.9532);transform-origin:0 50%;-webkit-text-stroke:0.1px #1c1c1e;left:547.6px;">Anfrage auf <b>Krankheit</b> von <b>Theo Hofmann</b> genehmigen</div><div class="abs" style="top:550.2px;height:15px;line-height:15px;font-size:11.5px;color:#666;white-space:nowrap;transform:scaleX(0.9782);transform-origin:0 50%;left:547.6px;">3 Tage – vom 02.10.2023 bis 04.10.2023</div><div class="abs" style="top:571.0px;height:18px;line-height:18px;font-size:13.5px;color:#3a7ad8;white-space:nowrap;transform:scaleX(0.9756);transform-origin:0 50%;left:547.6px;text-decoration:underline;text-underline-offset:2px;">Überprüfen</div><div class="abs btn" style="left:910.2px;top:529px;width:35.200px;height:35.200px"></div><svg class="abs" style="left:917.8px;top:536.6px" width="20" height="20" viewBox="0 0 20 20" fill="none" stroke="#303030" stroke-width="2" stroke-linecap="round" stroke-linejoin="round"><path d="M6.200 6.200 L13.800 13.800 M13.800 6.200 L6.200 13.800" stroke-width="2.300" stroke-linecap="butt"/></svg><div class="abs btn" style="left:953.2px;top:529px;width:35.200px;height:35.200px"></div><svg class="abs" style="left:960.8px;top:536.6px" width="20" height="20" viewBox="0 0 20 20" fill="none" stroke="#303030" stroke-width="2" stroke-linecap="round" stroke-linejoin="round"><path d="M4.600 10.400 L8 13.800 L15.400 6.400" stroke-width="2.400" stroke-linecap="butt" stroke-linejoin="miter"/></svg><div class="abs" style="top:642.4px;height:18px;line-height:18px;font-size:13.5px;color:#1c1c1e;white-space:nowrap;transform:scaleX(0.9575);transform-origin:0 50%;-webkit-text-stroke:0.1px #1c1c1e;left:547.6px;">Anfrage zu <b>Daten</b> von <b>Greta Nordyke</b> prüfen</div><div class="abs btn" style="left:953.2px;top:634.2px;width:35.200px;height:35.200px"></div><svg class="abs" style="left:960.8px;top:641.8px" width="20" height="20" viewBox="0 0 20 20" fill="none" stroke="#303030" stroke-width="2" stroke-linecap="round" stroke-linejoin="round"><circle cx="8.800" cy="8.800" r="4.300" stroke-width="2.100"/><path d="M12.200 12.200 L15.800 15.800" stroke-width="2.600"/></svg><div class="abs" style="top:716.5px;height:18px;line-height:18px;font-size:13.5px;color:#1c1c1e;white-space:nowrap;transform:scaleX(0.9664);transform-origin:0 50%;-webkit-text-stroke:0.1px #1c1c1e;left:547.6px;"><b>Am 30.11.2023 endenden Vertrag</b> von <b>Christian</b></div><div class="abs" style="top:734.1px;height:18px;line-height:18px;font-size:13.5px;color:#1c1c1e;white-space:nowrap;transform:scaleX(0.9633);transform-origin:0 50%;-webkit-text-stroke:0.1px #1c1c1e;left:547.6px;"><b>Windholz</b> überprüfen</div><div class="abs" style="top:754.3px;height:15px;line-height:15px;font-size:11.5px;color:#666;white-space:nowrap;transform:scaleX(0.9915);transform-origin:0 50%;left:547.6px;">3 Abwesenheitstage übrig</div><div class="abs btn" style="left:910.4px;top:715.6px;width:35.200px;height:35.200px"></div><svg class="abs" style="left:918px;top:723.2px" width="20" height="20" viewBox="0 0 20 20" fill="none" stroke="#303030" stroke-width="2" stroke-linecap="round" stroke-linejoin="round"><path d="M15.200 8.400 A5.600 5.600 0 0 0 5.200 7 M4.800 11.600 A5.600 5.600 0 0 0 14.800 13" stroke-width="1.700"/><path d="M15.900 4.400 V8.600 H11.700 Z M4.100 15.600 V11.400 H8.300 Z" stroke-width="0.700" fill="#303030"/></svg><div class="abs btn" style="left:953.2px;top:715.6px;width:35.200px;height:35.200px"></div><svg class="abs" style="left:960.8px;top:723.2px" width="20" height="20" viewBox="0 0 20 20" fill="none" stroke="#303030" stroke-width="2" stroke-linecap="round" stroke-linejoin="round"><path d="M10 4.200 V9.800" stroke-width="1.900"/><path d="M6.600 6.300 A5.300 5.300 0 1 0 13.400 6.300" stroke-width="1.800"/></svg><svg class="abs" style="left:499.5px;top:528.9px" width="41" height="41" viewBox="0 0 41 41"><defs><clipPath id="av1"><circle cx="20.500" cy="20.500" r="20.300"/></clipPath><filter id="av1f" x="-10%" y="-10%" width="120%" height="120%"><feGaussianBlur stdDeviation="0.700"/></filter></defs><g clip-path="url(#av1)"><g filter="url(#av1f)"><rect x="-3" y="-3" width="47" height="47" fill="#cbd7d9"/><path d="M3 34 C9 29.500 14 28 16.500 27.300 L24.500 27.300 C29 28 33 30 38 34 V44 H3 Z" fill="#2d6d85"/><path d="M15.600 27 H25 L21 37.500 Z" fill="#d9b9a4"/><rect x="16.200" y="22" width="7.400" height="7.500" fill="#b98a72"/><ellipse cx="19.700" cy="18" rx="7.200" ry="9.300" fill="#cc9d84"/><path d="M11.800 17 C9.500 8 13 4 19 3.800 C25.500 3.600 29.500 7.500 28 16.500 C26.500 12 24 10 20.500 10.800 C16.500 9.500 13.500 12 11.800 17 Z" fill="#27282b"/><path d="M16.500 22.800 Q19.700 25 22.800 22.600" stroke="#f1e6e0" stroke-width="1.100" fill="none"/></g></g></svg><svg class="abs" style="left:499.5px;top:634.1px" width="41" height="41" viewBox="0 0 41 41"><defs><clipPath id="av2"><circle cx="20.500" cy="20.500" r="20.300"/></clipPath><filter id="av2f" x="-10%" y="-10%" width="120%" height="120%"><feGaussianBlur stdDeviation="0.700"/></filter></defs><g clip-path="url(#av2)"><g filter="url(#av2f)"><rect x="-3" y="-3" width="47" height="47" fill="#a9a3a6"/><path d="M6 44 C4 28 7 4 19.500 1.500 C32 2 36 24 35.500 44 Z" fill="#c29668"/><path d="M10 44 C11 38 15 36 20 36 C25 36 28 38 29 44 Z" fill="#3a2f2c"/><rect x="15.500" y="27" width="7.500" height="9.500" fill="#d19f86"/><ellipse cx="19.200" cy="19.800" rx="7.400" ry="10.300" fill="#e0b096"/><path d="M11.600 19 C11 9 15 6 19.500 6 C24.500 6 27.500 10 26.800 19 C25.500 13 23 10.500 19.500 10.500 C15.500 10.500 12.800 13.500 11.600 19 Z" fill="#c9a070"/><path d="M15.800 24.800 Q19.200 27.500 22.800 24.600" stroke="#f4e9e4" stroke-width="1.200" fill="none"/></g></g></svg><svg class="abs" style="left:499.5px;top:715.7px" width="41" height="41" viewBox="0 0 41 41"><defs><clipPath id="av3"><circle cx="20.500" cy="20.500" r="20.300"/></clipPath><filter id="av3f" x="-10%" y="-10%" width="120%" height="120%"><feGaussianBlur stdDeviation="0.700"/></filter></defs><g clip-path="url(#av3)"><g filter="url(#av3f)"><rect x="-3" y="-3" width="47" height="47" fill="#7e9468"/><rect x="-3" y="-3" width="16" height="20" fill="#b4bca6"/><rect x="30" y="8" width="14" height="12" fill="#a9b598"/><path d="M2 30 C9 26.500 14 25.500 17 24.800 H27 C31 25.500 35 27 40 30 V44 H2 Z" fill="#4c1b32"/><rect x="18" y="21" width="8" height="6.500" fill="#c58f80"/><path d="M17.500 24.600 Q22 29 26.800 24.600 Z" fill="#cf998a"/><ellipse cx="22" cy="15.800" rx="7.800" ry="9.800" fill="#dba494"/><path d="M13.600 15 C11 4 16 0 23 0 C30 0 34 5 31.500 14 C30 10 27 7.500 22.500 8 C18 7.500 15 10 13.600 15 Z" fill="#2a1f1e"/><path d="M18.500 19.500 Q22 22.500 25.800 19.300" stroke="#f6ebe6" stroke-width="1.300" fill="none"/></g></g></svg><div class="abs" style="top:236.9px;height:20px;line-height:20px;font-size:15.5px;color:#151515;white-space:nowrap;transform:scaleX(0.9627);transform-origin:0 50%;-webkit-text-stroke:0.8px #151515;left:1054.5px;">Heute abwesend</div><svg class="abs" style="left:1223px;top:240px" width="16" height="16" viewBox="0 0 16 16"><circle cx="8" cy="8" r="5.700" fill="none" stroke="#1c1c1c" stroke-width="1.400"/><circle cx="8" cy="5.300" r="0.950" fill="#1c1c1c"/><path d="M6.900 7.300 H8.500 V10.600 M6.800 10.800 H9.600" stroke="#1c1c1c" stroke-width="1.200" fill="none"/></svg><div class="abs" style="left:1054px;top:275px;width:12.600px;height:12.600px;border-radius:50%;border:4.300px solid #1b74e4;background:#fff"></div><div class="abs" style="top:272.1px;height:18px;line-height:18px;font-size:13.5px;color:#1c1c1e;white-space:nowrap;transform:scaleX(0.9410);transform-origin:0 50%;-webkit-text-stroke:0.15px #1c1c1e;left:1077.3px;">Mein Team</div><div class="abs" style="left:1054px;top:302.700px;width:12.600px;height:12.600px;border-radius:50%;border:1.200px solid #bdbdbd;background:#fff"></div><div class="abs" style="top:300.1px;height:18px;line-height:18px;font-size:13.5px;color:#1c1c1e;white-space:nowrap;transform:scaleX(0.9621);transform-origin:0 50%;-webkit-text-stroke:0.15px #1c1c1e;left:1077.3px;">Alle Mitarbeitenden</div><div class="abs inp" style="left:1054.200px;top:331.700px;width:183px;height:35.300px"></div><svg class="abs" style="left:1072px;top:341px" width="16" height="16" viewBox="0 0 16 16"><path d="M2.600 2.400 H13.400 L9.300 7.600 V12.200 L6.700 13.800 V7.600 Z" fill="none" stroke="#b5b5b5" stroke-width="1.200" stroke-linejoin="round"/></svg><svg class="abs" style="left:1134px;top:381px" width="23" height="23" viewBox="0 0 23 23"><circle cx="11.500" cy="11.500" r="11.200" fill="#4a4a4a"/><circle cx="8" cy="9" r="1.350" fill="#fff"/><circle cx="15" cy="9" r="1.350" fill="#fff"/><path d="M6.800 13.800 Q11.500 18 16.200 13.800" stroke="#fff" stroke-width="1.500" fill="none" stroke-linecap="round"/></svg><div class="abs" style="top:412.0px;height:18px;line-height:18px;font-size:13.5px;color:#151515;white-space:nowrap;font-weight:bold;transform:scaleX(0.9396);transform-origin:50% 50%;left:1145.7px;width:0;display:flex;justify-content:center;"><span style="white-space:nowrap">Keine Abwesenheiten bis</span></div><div class="abs" style="top:430.3px;height:18px;line-height:18px;font-size:13.5px;color:#151515;white-space:nowrap;font-weight:bold;transform:scaleX(1.0556);transform-origin:50% 50%;left:1145.3px;width:0;display:flex;justify-content:center;"><span style="white-space:nowrap">jetzt</span></div><div class="abs" style="top:454.0px;height:18px;line-height:18px;font-size:13.5px;color:#6b6b6b;white-space:nowrap;transform:scaleX(0.9471);transform-origin:50% 50%;left:1145.7px;width:0;display:flex;justify-content:center;"><span style="white-space:nowrap">Alle Ihre Kollegen sollten heute</span></div><div class="abs" style="top:472.0px;height:18px;line-height:18px;font-size:13.5px;color:#6b6b6b;white-space:nowrap;transform:scaleX(0.9511);transform-origin:50% 50%;left:1145.3px;width:0;display:flex;justify-content:center;"><span style="white-space:nowrap">erreichbar sein.</span></div><div class="abs hr" style="left:1054px;top:513.500px;width:183px"></div><div class="abs" style="top:535.5px;height:20px;line-height:20px;font-size:15.5px;color:#151515;white-space:nowrap;transform:scaleX(0.9823);transform-origin:0 50%;-webkit-text-stroke:0.8px #151515;left:1054.5px;">Geburtstage</div><svg class="abs" style="left:1135px;top:578px" width="22" height="24" viewBox="0 0 22 24" fill="#4a4a4a"><ellipse cx="5" cy="2.200" rx="1.100" ry="1.700"/><ellipse cx="11" cy="2.200" rx="1.100" ry="1.700"/><ellipse cx="17" cy="2.200" rx="1.100" ry="1.700"/><rect x="4.100" y="4.600" width="1.800" height="6"/><rect x="10.100" y="4.600" width="1.800" height="6"/><rect x="16.100" y="4.600" width="1.800" height="6"/><path d="M2.200 10.400 H19.800 Q21 10.400 21 11.600 V15.800 Q18.500 18 16 15.800 Q13.500 13.800 11 15.800 Q8.500 18 6 15.800 Q3.500 13.800 1 15.800 V11.600 Q1 10.400 2.200 10.400 Z"/><path d="M1 18.200 Q3.500 16 6 18.200 Q8.500 20.200 11 18.200 Q13.500 16 16 18.200 Q18.500 20.200 21 18.200 V23.400 H1 Z"/></svg><div class="abs" style="top:610.0px;height:18px;line-height:18px;font-size:13.5px;color:#151515;white-space:nowrap;font-weight:bold;transform:scaleX(0.9520);transform-origin:50% 50%;left:1145.7px;width:0;display:flex;justify-content:center;"><span style="white-space:nowrap">Heute ist kein Geburtstag</span></div><div class="abs" style="top:634.0px;height:18px;line-height:18px;font-size:13.5px;color:#6b6b6b;white-space:nowrap;transform:scaleX(0.9455);transform-origin:50% 50%;left:1145.7px;width:0;display:flex;justify-content:center;"><span style="white-space:nowrap">Wünsche den Kollegen doch</span></div><div class="abs" style="top:652.0px;height:18px;line-height:18px;font-size:13.5px;color:#6b6b6b;white-space:nowrap;transform:scaleX(0.9498);transform-origin:50% 50%;left:1145.5px;width:0;display:flex;justify-content:center;"><span style="white-space:nowrap">einfach so einen schönen Tag.</span></div><div class="abs" style="left:1209px;top:728.600px;width:53.500px;height:53.500px;border-radius:50%;background:#25bde0;box-shadow:0 3px 10px rgba(0,0,0,.22)"></div><div class="abs" style="top:734.3px;height:43px;line-height:43px;font-size:33px;color:#fff;white-space:nowrap;font-weight:bold;transform:scaleX(0.8428);transform-origin:50% 50%;left:1236px;width:0;display:flex;justify-content:center;"><span style="white-space:nowrap">?</span></div><svg class="abs" style="left:438px;top:336.300px" width="12" height="16.500" viewBox="0 0 16 22"><path d="M3 2.500 V17 L6.400 13.800 L8.800 19.400 L11.200 18.400 L8.800 12.900 H13.400 Z" fill="#0a0a0a" stroke="#fff" stroke-width="0.900" stroke-linejoin="round"/></svg><div class="abs" style="left:220px;top:739.600px;width:208.300px;height:46px;border-radius:23px;background:#1f1d21"></div><div class="abs" style="left:235px;top:746.900px;width:31.600px;height:31.600px;border-radius:50%;background:#3e3945"></div><div class="abs" style="left:243.500px;top:755.400px;width:14.600px;height:14.600px;border-radius:2.200px;background:#aaa4b8"></div><div class="abs" style="left:279px;top:756.500px;width:4.300px;height:12.300px;border-radius:2px;background:#b7b2c0"></div><div class="abs" style="left:285.700px;top:756.500px;width:4.300px;height:12.300px;border-radius:2px;background:#b7b2c0"></div><div class="abs" style="top:754.8px;height:18px;line-height:18px;font-size:13.5px;color:#b9b4c1;white-space:nowrap;font-weight:bold;transform:scaleX(1.0543);transform-origin:0 50%;left:309.7px;">5:00</div><div class="abs" style="left:352.200px;top:750.500px;width:1.200px;height:24.500px;background:#3c393f"></div><svg class="abs" style="left:362px;top:754px" width="18" height="18" viewBox="0 0 18 18" fill="none" stroke="#c5c1cc" stroke-width="1.500" stroke-linecap="round" stroke-linejoin="round"><path d="M4.300 5.200 A5.700 5.700 0 1 1 3 9.600"/><path d="M4.700 2 V5.600 H8.300"/></svg><svg class="abs" style="left:391px;top:754px" width="18" height="18" viewBox="0 0 18 18" fill="none" stroke="#c5c1cc" stroke-width="1.600" stroke-linecap="round" stroke-linejoin="round"><path d="M2.200 4.600 H15.800 M6.600 4.400 V2.400 H11.400 V4.400"/><path d="M3.800 4.800 V14.400 Q3.800 16 5.400 16 H12.600 Q14.200 16 14.200 14.400 V4.800"/><path d="M7.400 8 V12.600 M10.600 8 V12.600"/></svg><svg class="abs" style="left:0;top:590px" width="210" height="210" viewBox="0 0 800 800">
<defs><clipPath id="cam"><circle cx="403" cy="400" r="375"/></clipPath>
<filter id="bl" x="-5%" y="-5%" width="110%" height="110%"><feGaussianBlur stdDeviation="5"/></filter>
<linearGradient id="wall" x1="0" x2="1"><stop offset="0" stop-color="#cfcbbf"/><stop offset="1" stop-color="#e2dfd6"/></linearGradient>
<linearGradient id="hairg" x1="0" y1="0" x2="0" y2="1"><stop offset="0" stop-color="#3a2e2a"/><stop offset="1" stop-color="#241c1b"/></linearGradient></defs>
<g clip-path="url(#cam)"><g filter="url(#bl)">
<rect x="0" y="0" width="800" height="800" fill="#b9b7ae"/>
<rect x="530" y="0" width="270" height="800" fill="url(#wall)"/>
<rect x="722" y="200" width="60" height="230" fill="#ecebe6"/>
<rect x="716" y="200" width="8" height="232" fill="#bdbab0"/>
<path d="M260 20 H545 V250 H260 Z" fill="#8d8f88"/>
<path d="M285 55 H480 V140 H285 Z" fill="#6f726d"/>
<path d="M300 70 H470 V100 H300 Z" fill="#a6a8a2"/>
<path d="M0 60 H270 V520 H0 Z" fill="#363a40"/>
<path d="M95 262 Q170 215 255 225 V320 Q170 292 95 322 Z" fill="#a4a6a6"/>
<path d="M20 300 H210 V480 H20 Z" fill="#1d2125"/>
<path d="M95 300 H240 V362 H95 Z" fill="#7d8185"/>
<path d="M30 380 H75 V470 H30 Z" fill="#4c6a72"/>
<path d="M150 475 C150 400 205 340 228 240 C232 140 295 92 372 92 C455 92 505 150 510 240 C545 320 570 410 605 510 C650 600 665 660 645 705 C600 725 540 705 500 645 L420 470 Z" fill="url(#hairg)"/>
<path d="M40 520 C60 490 100 480 140 500 L420 790 L60 800 Z" fill="#85775f"/>
<path d="M110 505 C170 480 220 470 270 465 L440 520 L450 560 L405 790 L330 760 C260 660 190 570 110 505 Z" fill="#efeeec"/>
<path d="M440 540 C480 560 540 640 570 740 L430 800 L395 780 Z" fill="#7d6f5a"/>
<path d="M270 440 H425 V520 C400 570 330 580 275 520 Z" fill="#c4937f"/>
<path d="M243 290 C238 200 290 150 355 150 C430 150 472 210 468 300 C465 380 420 465 350 470 C290 465 248 380 243 290 Z" fill="#dcae9c"/>
<path d="M238 300 C225 180 300 120 370 125 C450 125 490 190 480 300 C470 230 430 180 360 175 C300 175 255 220 238 300 Z" fill="#2e2422"/>
<path d="M268 262 q30 -16 62 -4" stroke="#35282a" stroke-width="9" fill="none" stroke-linecap="round"/>
<path d="M385 258 q32 -14 64 6" stroke="#35282a" stroke-width="9" fill="none" stroke-linecap="round"/>
<ellipse cx="302" cy="293" rx="20" ry="8" fill="#3e2e2c"/>
<ellipse cx="415" cy="293" rx="21" ry="8" fill="#3e2e2c"/>
<path d="M322 398 Q352 384 394 394 Q360 420 322 398 Z" fill="#a9595f"/>
<path d="M335 350 q20 12 40 0" stroke="#b98673" stroke-width="8" fill="none"/>
<circle cx="243" cy="385" r="9" fill="none" stroke="#d9d2c4" stroke-width="4"/>
<circle cx="468" cy="398" r="11" fill="none" stroke="#d9d2c4" stroke-width="4"/>
<path d="M275 500 Q330 640 405 690 Q425 600 432 520" stroke="#b9b3ac" stroke-width="3" fill="none"/>
</g></g></svg>
</body>
</html>
